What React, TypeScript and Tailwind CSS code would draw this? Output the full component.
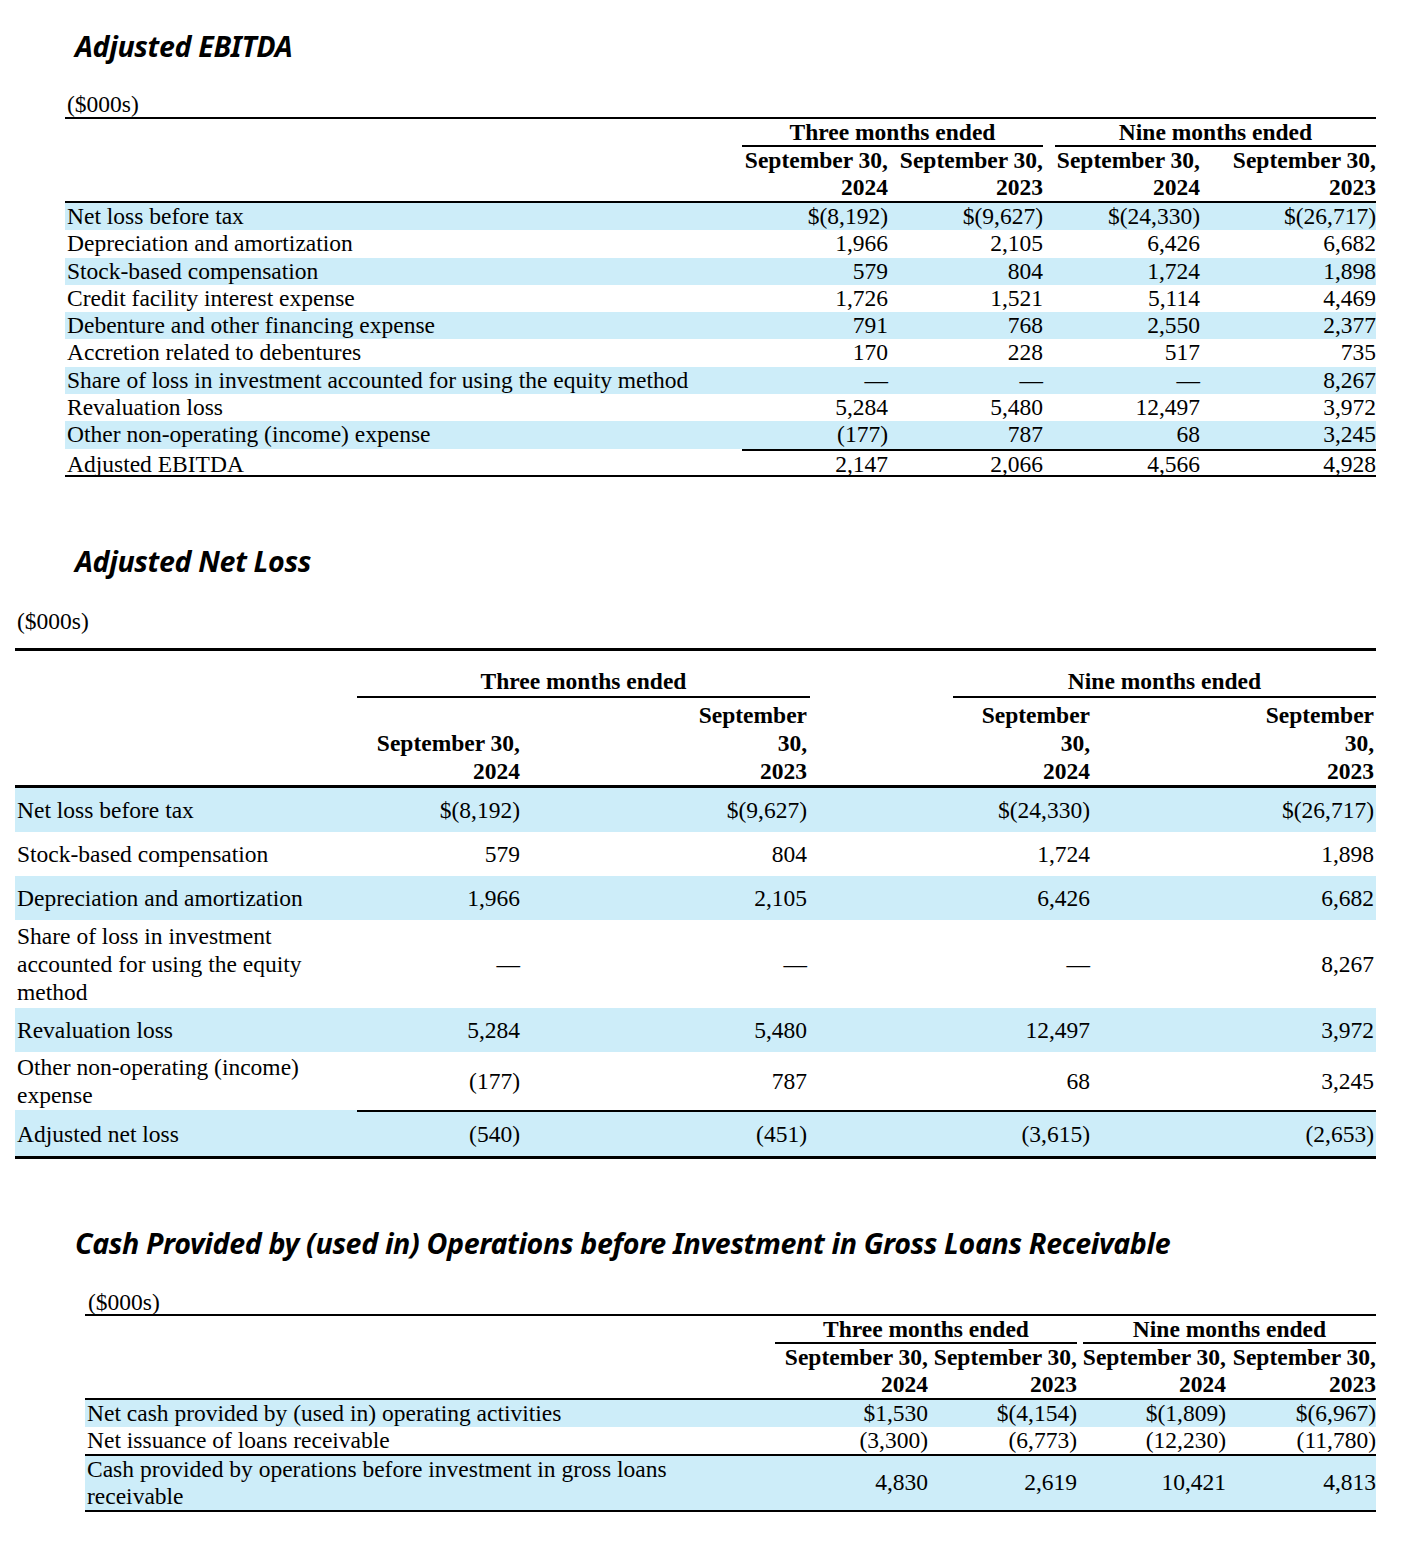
import React from "react";

const serif = { fontFamily: '"Liberation Serif", "Times New Roman", serif' };
const sans = { fontFamily: '"Noto Sans", "Open Sans", sans-serif' };

type Row = { label: React.ReactNode; v: string[]; blue: boolean; py?: string };

const t1: Row[] = [
  { label: "Net loss before tax", v: ["$(8,192)", "$(9,627)", "$(24,330)", "$(26,717)"], blue: true },
  { label: "Depreciation and amortization", v: ["1,966", "2,105", "6,426", "6,682"], blue: false },
  { label: "Stock-based compensation", v: ["579", "804", "1,724", "1,898"], blue: true },
  { label: "Credit facility interest expense", v: ["1,726", "1,521", "5,114", "4,469"], blue: false },
  { label: "Debenture and other financing expense", v: ["791", "768", "2,550", "2,377"], blue: true },
  { label: "Accretion related to debentures", v: ["170", "228", "517", "735"], blue: false },
  { label: "Share of loss in investment accounted for using the equity method", v: ["—", "—", "—", "8,267"], blue: true },
  { label: "Revaluation loss", v: ["5,284", "5,480", "12,497", "3,972"], blue: false },
  { label: "Other non-operating (income) expense", v: ["(177)", "787", "68", "3,245"], blue: true },
];

const t2: Row[] = [
  { label: "Net loss before tax", v: ["$(8,192)", "$(9,627)", "$(24,330)", "$(26,717)"], blue: true },
  { label: "Stock-based compensation", v: ["579", "804", "1,724", "1,898"], blue: false },
  { label: "Depreciation and amortization", v: ["1,966", "2,105", "6,426", "6,682"], blue: true },
  {
    label: (
      <>
        Share of loss in investment
        <br />
        accounted for using the equity
        <br />
        method
      </>
    ),
    v: ["—", "—", "—", "8,267"],
    blue: false,
  },
  { label: "Revaluation loss", v: ["5,284", "5,480", "12,497", "3,972"], blue: true },
  {
    label: (
      <>
        Other non-operating (income)
        <br />
        expense
      </>
    ),
    v: ["(177)", "787", "68", "3,245"],
    blue: false,
    py: "py-[1px]",
  },
];

const blue = "bg-[#cdedf9]";

function Title({ children, className }: { children: React.ReactNode; className?: string }) {
  return (
    <div
      className={`ml-[75px] text-[28.6px] leading-[36px] font-bold italic text-black tracking-[-0.35px] ${className ?? ""}`}
      style={sans}
    >
      {children}
    </div>
  );
}

function Table1() {
  const cols = "grid grid-cols-[677px_151px_156px_156px_171px]";
  const pr = ["pr-[5px]", "pr-[6px]", "pr-[5px]", "pr-0"];
  return (
    <div className="ml-[65px] w-[1311px] mt-[27px] text-[23.5px] text-black" style={serif}>
      <div className="h-[28px] leading-[27px] border-b-2 border-black pl-[2px]">($000s)</div>
      <div className={`${cols} font-bold`}>
        <div />
        <div className="col-span-2 mr-[6px] h-[28px] leading-[26px] text-center border-b-2 border-black">Three months ended</div>
        <div className="col-span-2 ml-[6px] h-[28px] leading-[26px] text-center border-b-2 border-black">Nine months ended</div>
      </div>
      <div className={`${cols} font-bold border-b-2 border-black leading-[27px]`}>
        <div />
        {["2024", "2023", "2024", "2023"].map((y, i) => (
          <div key={i} className={`text-right whitespace-nowrap ${pr[i]}`}>
            September 30,
            <br />
            {y}
          </div>
        ))}
      </div>
      {t1.map((r, idx) => (
        <div key={idx} className={`${cols} h-[27.3px] leading-[27.3px] ${r.blue ? blue : ""}`}>
          <div className="pl-[2px] whitespace-nowrap">{r.label}</div>
          {r.v.map((x, i) => (
            <div key={i} className={`text-right ${pr[i]}`}>
              {x}
            </div>
          ))}
        </div>
      ))}
      <div className={`${cols} h-[28px] leading-[26px] border-b-2 border-black`}>
        <div className="pl-[2px] pt-[2px]">Adjusted EBITDA</div>
        {["2,147", "2,066", "4,566", "4,928"].map((x, i) => (
          <div key={i} className={`text-right border-t-2 border-black ${pr[i]}`}>
            {x}
          </div>
        ))}
      </div>
    </div>
  );
}

function Table2() {
  const cols = "grid grid-cols-[342px_168px_285px_143px_141px_282px]";
  const pr = ["pr-[5px]", "pr-[3px]", "pr-[4px]", "pr-[2px]"];
  const cellCls = (i: number) => `text-right ${pr[i]} ${i >= 2 ? (i === 2 ? "col-start-5" : "col-start-6") : ""}`;
  const totals = ["(540)", "(451)", "(3,615)", "(2,653)"];
  return (
    <div className="ml-[15px] w-[1361px] text-[23.5px] text-black" style={serif}>
      <div className="pb-[13px] border-b-[3px] border-black">
        <div className="h-[27px] leading-[27px] pl-[2px]">($000s)</div>
      </div>
      <div className={`${cols} font-bold`}>
        <div />
        <div className="col-span-2 h-[47px] pb-[1px] flex items-end justify-center leading-[28px] border-b-2 border-black">
          Three months ended
        </div>
        <div />
        <div className="col-span-2 h-[47px] pb-[1px] flex items-end justify-center leading-[28px] border-b-2 border-black">
          Nine months ended
        </div>
      </div>
      <div className={`${cols} font-bold leading-[28px] pt-[3px] border-b-[3px] border-black`}>
        <div />
        <div className="text-right pr-[5px] whitespace-nowrap">
          <br />
          September 30,
          <br />
          2024
        </div>
        <div className="text-right pr-[3px]">
          September
          <br />
          30,
          <br />
          2023
        </div>
        <div className="col-start-5 text-right pr-[4px]">
          September
          <br />
          30,
          <br />
          2024
        </div>
        <div className="col-start-6 text-right pr-[2px]">
          September
          <br />
          30,
          <br />
          2023
        </div>
      </div>
      {t2.map((r, idx) => (
        <div
          key={idx}
          className={`${cols} min-h-[44px] ${r.py ?? "py-[2px]"} items-center leading-[28px] ${r.blue ? blue : ""}`}
        >
          <div className="pl-[2px]">{r.label}</div>
          {r.v.map((x, i) => (
            <div key={i} className={cellCls(i)}>
              {x}
            </div>
          ))}
        </div>
      ))}
      <div className={`${cols} leading-[28px] border-b-[3px] border-black ${blue}`}>
        <div className="h-[46px] pt-[2px] pl-[2px] flex items-center">Adjusted net loss</div>
        <div className="h-[46px] border-t-2 border-black flex items-center justify-end pr-[5px]">{totals[0]}</div>
        <div className="h-[46px] border-t-2 border-black flex items-center justify-end pr-[3px]">{totals[1]}</div>
        <div className="h-[46px] border-t-2 border-black" />
        <div className="h-[46px] border-t-2 border-black flex items-center justify-end pr-[4px]">{totals[2]}</div>
        <div className="h-[46px] border-t-2 border-black flex items-center justify-end pr-[2px]">{totals[3]}</div>
      </div>
    </div>
  );
}

function Table3() {
  const cols = "grid grid-cols-[690px_157px_148px_150px_146px]";
  const pr = ["pr-[4px]", "pr-[3px]", "pr-[4px]", "pr-0"];
  return (
    <div className="ml-[85px] w-[1291px] mt-[28px] text-[23.5px] text-black" style={serif}>
      <div className="h-[27px] leading-[27px] border-b-2 border-black pl-[3px]">($000s)</div>
      <div className={`${cols} font-bold`}>
        <div />
        <div className="col-span-2 mr-[3px] h-[28px] leading-[26px] text-center border-b-2 border-black">Three months ended</div>
        <div className="col-span-2 ml-[3px] h-[28px] leading-[26px] text-center border-b-2 border-black">Nine months ended</div>
      </div>
      <div className={`${cols} font-bold border-b-2 border-black leading-[27px]`}>
        <div />
        {["2024", "2023", "2024", "2023"].map((y, i) => (
          <div key={i} className={`text-right whitespace-nowrap ${pr[i]}`}>
            September 30,
            <br />
            {y}
          </div>
        ))}
      </div>
      <div className={`${cols} h-[27px] leading-[27px] ${blue}`}>
        <div className="pl-[2px]">Net cash provided by (used in) operating activities</div>
        {["$1,530", "$(4,154)", "$(1,809)", "$(6,967)"].map((x, i) => (
          <div key={i} className={`text-right ${pr[i]}`}>
            {x}
          </div>
        ))}
      </div>
      <div className={`${cols} h-[29px] leading-[27px] border-b-2 border-black`}>
        <div className="pl-[2px]">Net issuance of loans receivable</div>
        {["(3,300)", "(6,773)", "(12,230)", "(11,780)"].map((x, i) => (
          <div key={i} className={`text-right ${pr[i]}`}>
            {x}
          </div>
        ))}
      </div>
      <div className={`${cols} leading-[27px] items-center border-b-2 border-black ${blue}`}>
        <div className="pl-[2px]">
          Cash provided by operations before investment in gross loans
          <br />
          receivable
        </div>
        {["4,830", "2,619", "10,421", "4,813"].map((x, i) => (
          <div key={i} className={`text-right ${pr[i]}`}>
            {x}
          </div>
        ))}
      </div>
    </div>
  );
}

export default function App() {
  return (
    <div className="w-[1406px] min-h-[1551px] bg-white pt-[28px]">
      <Title>Adjusted EBITDA</Title>
      <Table1 />
      <Title className="mt-[66px]">Adjusted Net Loss</Title>
      <div className="mt-[29px]">
        <Table2 />
      </div>
      <Title className="mt-[66px]">Cash Provided by (used in) Operations before Investment in Gross Loans Receivable</Title>
      <Table3 />
    </div>
  );
}
